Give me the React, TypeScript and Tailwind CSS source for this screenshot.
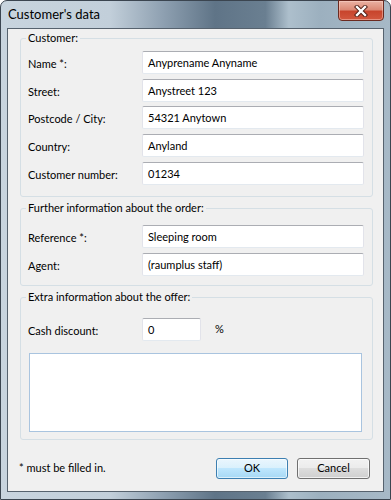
import React from 'react';

const font = 'font-["Lato","Segoe_UI",sans-serif]';

const inputCls =
	'h-[23px] rounded-[2px] border border-t-[#abadb3] border-x-[#e2e3ea] border-b-[#e3e9ef] bg-white pl-[5px] text-[11px] leading-[21px] text-black';

interface IRow {
	label: string;
	value: string;
	mt: string;
}

const customerRows: IRow[] = [
	{ label: 'Name *:', value: 'Anyprename Anyname', mt: 'mt-[5px]' },
	{ label: 'Street:', value: 'Anystreet 123', mt: 'mt-[5px]' },
	{ label: 'Postcode / City:', value: '54321 Anytown', mt: 'mt-[4px]' },
	{ label: 'Country:', value: 'Anyland', mt: 'mt-[5px]' },
	{ label: 'Customer number:', value: '01234', mt: 'mt-[5px]' }
];

const orderRows: IRow[] = [
	{ label: 'Reference *:', value: 'Sleeping room', mt: 'mt-[9px]' },
	{ label: 'Agent:', value: '(raumplus staff)', mt: 'mt-[5px]' }
];

const Row = ({ row }: { row: IRow }) => (
	<div className={`flex items-center ${row.mt}`}>
		<span className="w-[121px] pl-[7px] pt-[2px] text-[11px] leading-[16px]">{row.label}</span>
		<div className={`w-[222px] ${inputCls}`}>{row.value}</div>
	</div>
);

const Group = ({
	title,
	className,
	children
}: {
	title: string;
	className: string;
	children: React.ReactNode;
}) => (
	<fieldset
		className={`ml-[12px] w-[353px] rounded-[3px] border border-[#d5dfe5] ${className}`}
	>
		<legend className="ml-[5px] px-[2px] text-[11px] leading-[16px]">{title}</legend>
		{children}
	</fieldset>
);

const CloseButton = () => (
	<div className="absolute right-[6px] top-[-1px] flex h-[21px] w-[46px] items-center justify-center rounded-b-[4px] border border-[#6b2a20] bg-[linear-gradient(to_bottom,#eab2a3_0%,#dc8a76_45%,#c8452d_55%,#d2583f_100%)] shadow-[inset_0_0_0_1px_rgba(255,220,210,0.45)]">
		<svg width="14" height="12" viewBox="0 0 14 12">
			<path d="M3 2 L11 10 M11 2 L3 10" stroke="#4a1a12" strokeWidth="4.2" strokeLinecap="square" />
			<path d="M3 2 L11 10 M11 2 L3 10" stroke="#ffffff" strokeWidth="2.4" strokeLinecap="square" />
		</svg>
	</div>
);

export default function App() {
	return (
		<div className={`h-[500px] w-[391px] bg-white ${font}`}>
			<div className="relative flex h-[500px] w-[391px] flex-col rounded-t-[7px] border border-[#3b4550] bg-[linear-gradient(90deg,#c8d4de_0%,#c2cfda_28%,#8d9fb0_42%,#5f7487_55%,#6a7f91_68%,#adbfcc_74%,#9cb0bf_82%,#a7b9c7_100%)]">
				<div className="flex h-[27px] items-center pl-[7px] text-[13px] text-black">
					Customer's data
				</div>
				<CloseButton />

				<div className="mx-[6px] flex h-[464px] flex-col border border-[#56626e] bg-[#f0f0f0] text-black">
					<Group title="Customer:" className="mt-[1px] pb-[11px]">
						{customerRows.map(row => (
							<Row key={row.label} row={row} />
						))}
					</Group>

					<Group title="Further information about the order:" className="mt-[3px] pb-[9px]">
						{orderRows.map(row => (
							<Row key={row.label} row={row} />
						))}
					</Group>

					<Group title="Extra information about the offer:" className="mt-[3px] pb-[7px]">
						<div className="mt-[13px] flex items-center">
							<span className="w-[121px] pl-[7px] pt-[2px] text-[11px] leading-[16px]">
								Cash discount:
							</span>
							<div className={`w-[59px] ${inputCls}`}>0</div>
							<span className="ml-[14px] text-[11px]">%</span>
						</div>
						<div className="ml-[8px] mt-[12px] h-[79px] w-[333px] border border-[#a9c4df] bg-white" />
					</Group>

					<div className="mt-[18px] flex items-center">
						<span className="pl-[11px] text-[11px]">* must be filled in.</span>
						<button className="ml-auto h-[21px] w-[72px] rounded-[3px] border border-[#3c7fb1] bg-[linear-gradient(to_bottom,#eaf6fd_0%,#d9f0fc_50%,#bee6fd_50%,#a7d9f5_100%)] text-[11px] shadow-[inset_0_0_0_1px_rgba(255,255,255,0.6)]">
							OK
						</button>
						<button className="ml-[9px] mr-[13px] h-[21px] w-[73px] rounded-[3px] border border-[#707070] bg-[linear-gradient(to_bottom,#f2f2f2_0%,#ebebeb_50%,#dddddd_50%,#cfcfcf_100%)] text-[11px] shadow-[inset_0_0_0_1px_rgba(255,255,255,0.7)]">
							Cancel
						</button>
					</div>
				</div>
			</div>
		</div>
	);
}
